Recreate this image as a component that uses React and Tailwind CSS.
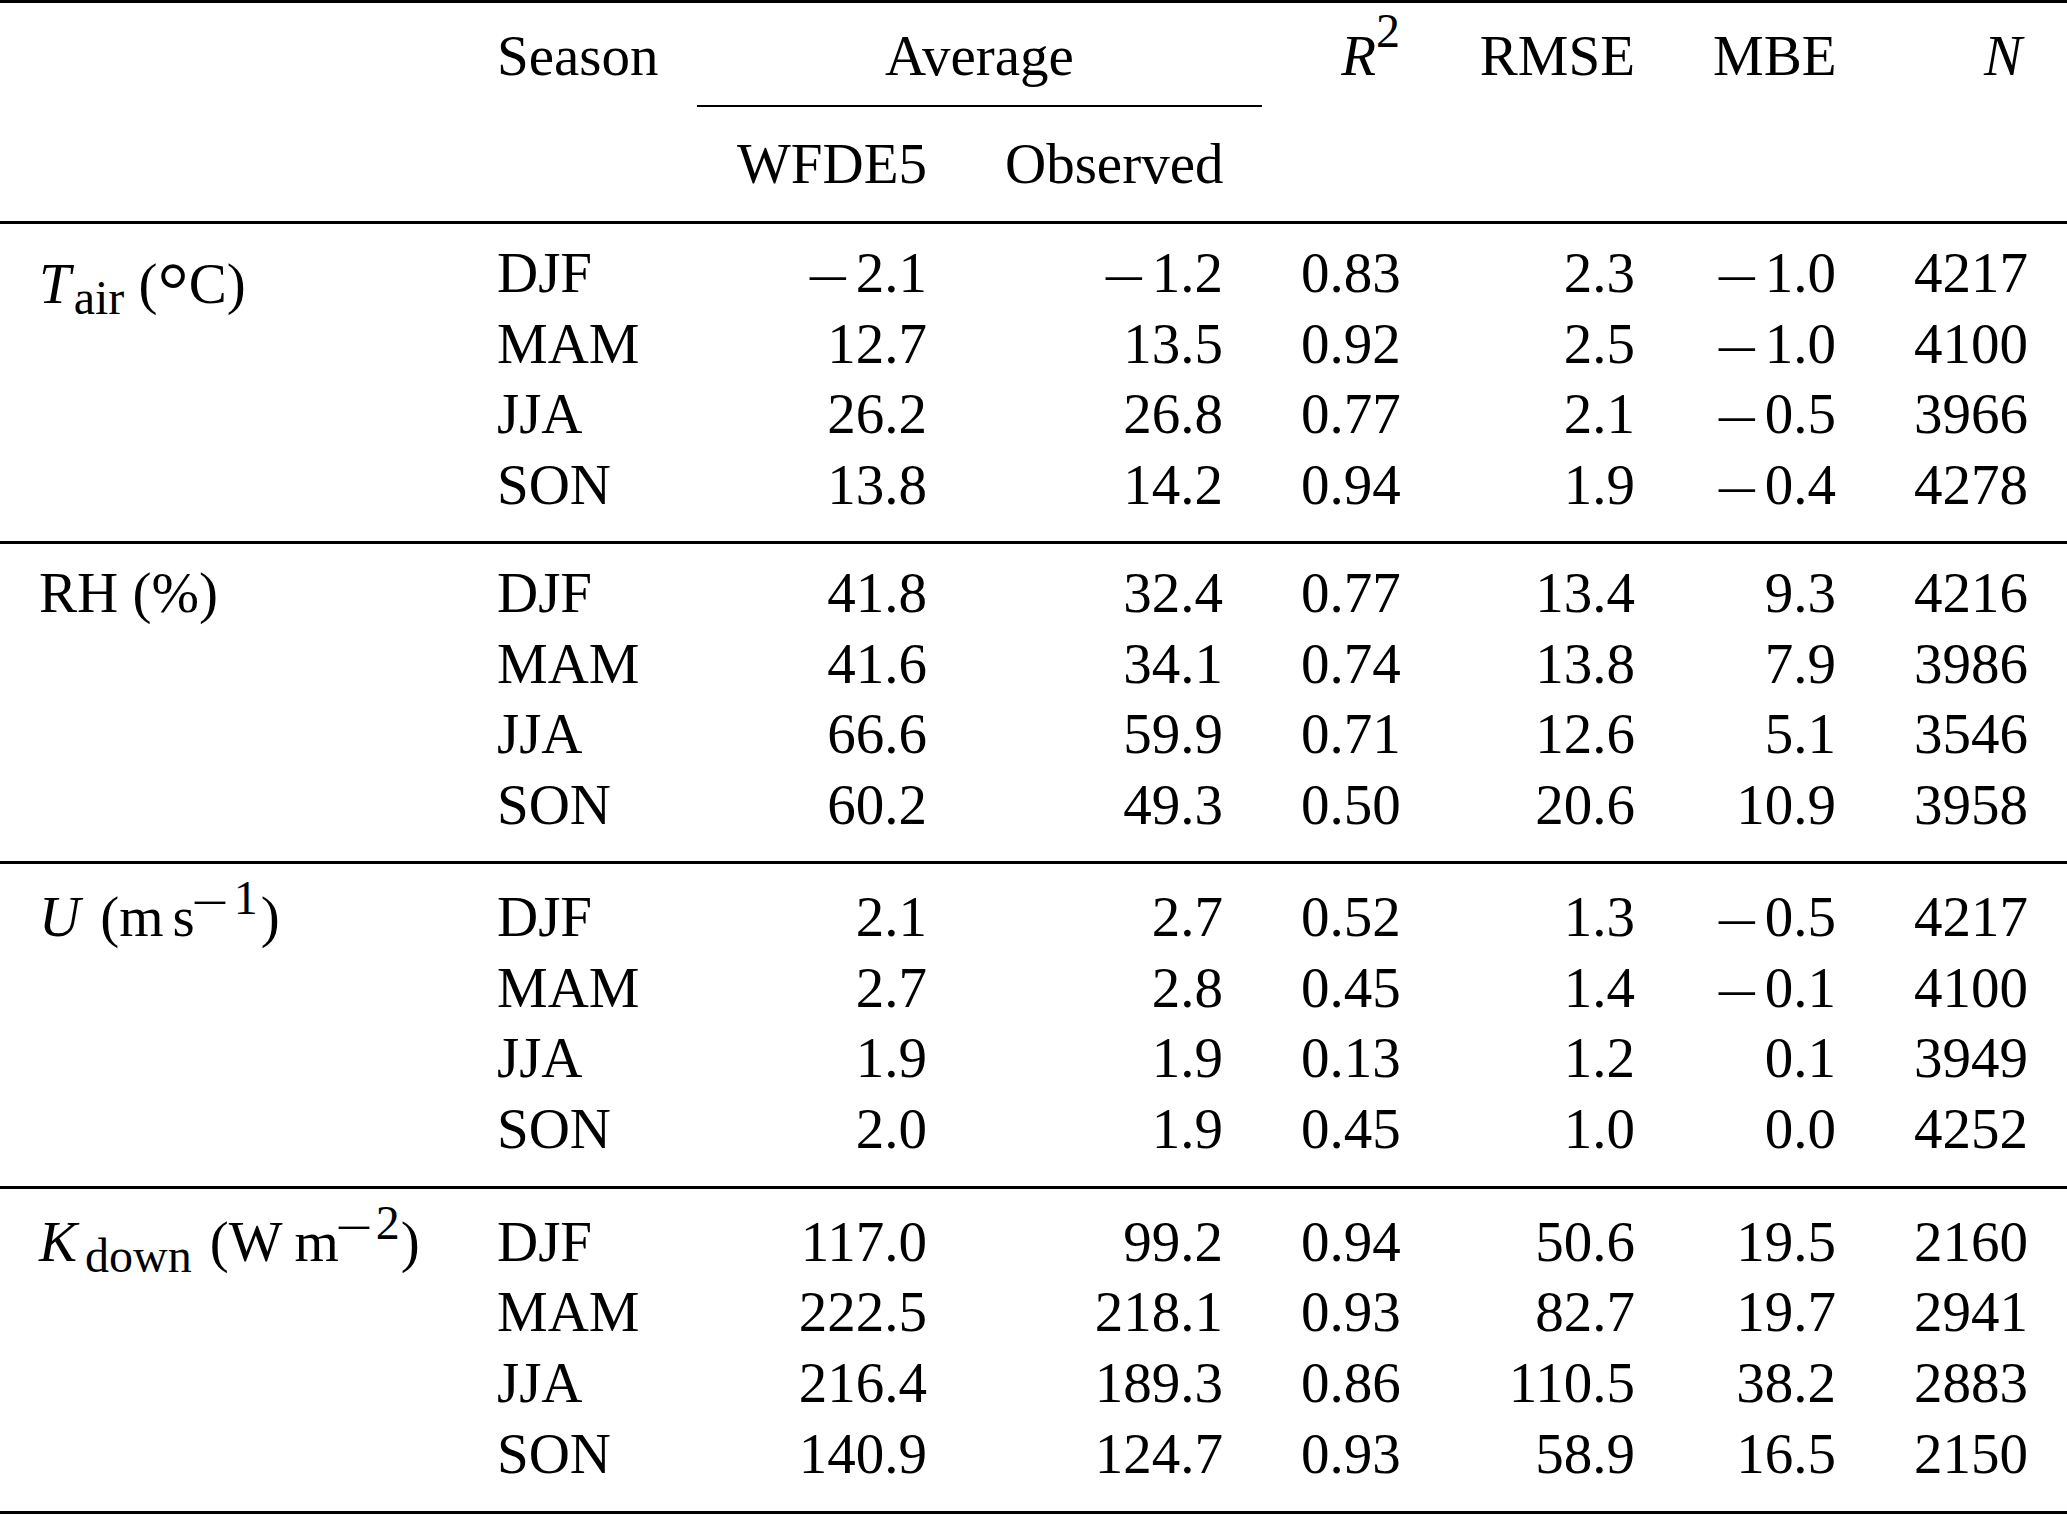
import React from "react";

const COLS = "grid grid-cols-[458px_239px_269px_296px_177px_235px_201px_192px]";

const Sub = ({ children }) => <span className="relative top-[11px] text-[48px] leading-none not-italic">{children}</span>;
const Sup = ({ children, className = "-top-[22px]" }) => <span className={`relative text-[48px] leading-none ${className}`}>{children}</span>;

// the long math minus of the typeset table
const Minus = ({ className = "mr-[17px]" }) => <span className={`inline-block origin-left scale-x-125 ${className}`}>–</span>;

const Num = ({ v }) =>
  v.startsWith("−") ? (
    <>
      <Minus />
      {v.slice(1)}
    </>
  ) : (
    v
  );

const SECTIONS = [
  {
    label: (
      <>
        <i>T</i>
        <span className="ml-[3px]" />
        <Sub>air</Sub> (<span className="relative top-[13px] text-[78px] leading-none">°</span>C)
      </>
    ),
    pad: "pt-[13.4px] pb-[20.4px]",
    rows: [
      ["DJF", "−2.1", "−1.2", "0.83", "2.3", "−1.0", "4217"],
      ["MAM", "12.7", "13.5", "0.92", "2.5", "−1.0", "4100"],
      ["JJA", "26.2", "26.8", "0.77", "2.1", "−0.5", "3966"],
      ["SON", "13.8", "14.2", "0.94", "1.9", "−0.4", "4278"],
    ],
  },
  {
    label: <>RH (%)</>,
    pad: "pt-[13.4px] pb-[20.4px]",
    rows: [
      ["DJF", "41.8", "32.4", "0.77", "13.4", "9.3", "4216"],
      ["MAM", "41.6", "34.1", "0.74", "13.8", "7.9", "3986"],
      ["JJA", "66.6", "59.9", "0.71", "12.6", "5.1", "3546"],
      ["SON", "60.2", "49.3", "0.50", "20.6", "10.9", "3958"],
    ],
  },
  {
    label: (
      <>
        <i>U</i>
        <span className="ml-[20px]">(m</span>
        <span className="ml-[9px]">s</span>
        <Sup>
          <Minus className="mr-[15px]" />1
        </Sup>
        <span className="ml-[3px]">)</span>
      </>
    ),
    pad: "pt-[17.4px] pb-[21.4px]",
    rows: [
      ["DJF", "2.1", "2.7", "0.52", "1.3", "−0.5", "4217"],
      ["MAM", "2.7", "2.8", "0.45", "1.4", "−0.1", "4100"],
      ["JJA", "1.9", "1.9", "0.13", "1.2", "0.1", "3949"],
      ["SON", "2.0", "1.9", "0.45", "1.0", "0.0", "4252"],
    ],
  },
  {
    label: (
      <>
        <i className="mr-[8px]">K</i>
        <Sub>down</Sub>
        <span className="ml-[18px]">(W</span>
        <span className="ml-[12px]">m</span>
        <Sup>
          <Minus className="mr-[13px]" />2
        </Sup>
        <span className="ml-[1px]">)</span>
      </>
    ),
    pad: "pt-[17.4px] pb-[21.4px]",
    rows: [
      ["DJF", "117.0", "99.2", "0.94", "50.6", "19.5", "2160"],
      ["MAM", "222.5", "218.1", "0.93", "82.7", "19.7", "2941"],
      ["JJA", "216.4", "189.3", "0.86", "110.5", "38.2", "2883"],
      ["SON", "140.9", "124.7", "0.93", "58.9", "16.5", "2150"],
    ],
  },
];

const Rule = () => <div className="h-[3px] bg-black" />;

export default function App() {
  return (
    <div className="w-[2067px] h-[1515px] bg-white text-black font-['Liberation_Serif','Times_New_Roman',serif] text-[57px] leading-[70.8px] overflow-hidden">
      <Rule />

      <div className={`${COLS} mt-[18.4px] h-[70.8px]`}>
        <div />
        <div className="px-[39px]">Season</div>
        <div className="col-span-2 px-[39px] text-center">Average</div>
        <div className="px-[39px] text-right">
          <i>R</i>
          <Sup className="-top-[28px]">2</Sup>
        </div>
        <div className="px-[39px] text-right">RMSE</div>
        <div className="px-[39px] text-right">MBE</div>
        <div className="px-[39px] text-right">
          <i className="mr-[6px]">N</i>
        </div>
      </div>

      <div className={`${COLS} mt-[13px]`}>
        <div className="col-start-3 col-span-2 h-[2px] bg-black" />
      </div>

      <div className={`${COLS} mt-[21.4px] h-[70.8px]`}>
        <div className="col-start-3 px-[39px] text-right">WFDE5</div>
        <div className="px-[39px] text-right">Observed</div>
      </div>

      <div className="mt-[22px]">
        {SECTIONS.map((s, i) => (
          <div key={i}>
            <Rule />
            <div className={s.pad}>
              {s.rows.map((r, j) => (
                <div key={j} className={`${COLS} h-[70.8px]`}>
                  <div className="px-[39px] whitespace-nowrap">{j === 0 ? s.label : null}</div>
                  <div className="px-[39px]">{r[0]}</div>
                  {r.slice(1).map((v, k) => (
                    <div key={k} className="px-[39px] text-right whitespace-nowrap">
                      <Num v={v} />
                    </div>
                  ))}
                </div>
              ))}
            </div>
          </div>
        ))}
        <Rule />
      </div>
    </div>
  );
}
